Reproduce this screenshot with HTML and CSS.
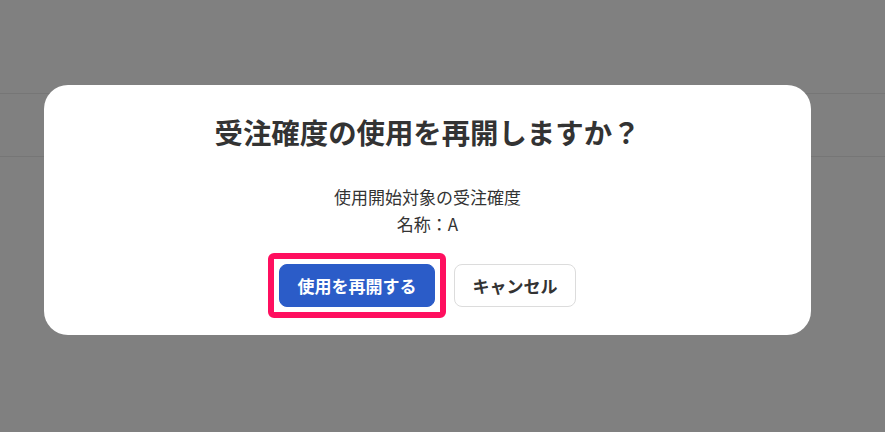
FILE: index.html
```html
<!DOCTYPE html>
<html lang="ja">
<head>
<meta charset="utf-8">
<title>受注確度の使用を再開</title>
<link rel="stylesheet" href="styles.css">
</head>
<body>
<div class="page">
  <div class="row row-top"></div>
  <div class="row row-second"></div>
</div>
<div class="overlay">
  <div class="modal" role="dialog" aria-modal="true">
    <h2 class="modal-title">受注確度の使用を再開しますか？</h2>
    <p class="modal-body">使用開始対象の受注確度<br>名称：A</p>
    <div class="modal-actions">
      <button class="btn btn-primary" type="button">使用を再開する</button>
      <button class="btn btn-secondary" type="button">キャンセル</button>
    </div>
  </div>
</div>
</body>
</html>
```
FILE: styles.css
```css
html, body {
  margin: 0;
  padding: 0;
}
body {
  width: 885px;
  height: 432px;
  overflow: hidden;
  background: #808080;
  font-family: "Noto Sans CJK JP", "Noto Sans", sans-serif;
  color: #333;
}
.page {
  display: flex;
  flex-direction: column;
}
.row {
  border-bottom: 1px solid #767676;
}
.row-top {
  height: 93px;
}
.row-second {
  height: 62px;
}
.overlay {
  position: fixed;
  inset: 0;
  padding: 85px 0 0 44px;
  display: flex;
  align-items: flex-start;
}
.modal {
  width: 767px;
  box-sizing: border-box;
  background: #fff;
  border-radius: 24px;
  padding: 26px 32px 28px;
  text-align: center;
}
.modal-title {
  margin: 0;
  font-size: 28.4px;
  line-height: 42px;
  font-weight: 700;
  color: #333;
}
.modal-body {
  margin: 30px 0 0;
  font-size: 17px;
  line-height: 27px;
  color: #333;
}
.modal-actions {
  margin-top: 27px;
  display: flex;
  justify-content: center;
  gap: 19px;
}
.btn {
  height: 43px;
  box-sizing: border-box;
  padding: 0 17.5px;
  border-radius: 8px;
  font-family: inherit;
  font-size: 17px;
  font-weight: 700;
  line-height: 1;
  cursor: pointer;
}
.btn-primary {
  position: relative;
  background: #2b5cc8;
  border: 1px solid #2b5cc8;
  color: #fff;
}
.btn-primary::after {
  content: "";
  position: absolute;
  inset: -12px;
  border: 6px solid #ff0f5f;
  border-radius: 6px;
  pointer-events: none;
}
.btn-secondary {
  background: #fff;
  border: 1px solid #dcdcdc;
  color: #333;
}
```
